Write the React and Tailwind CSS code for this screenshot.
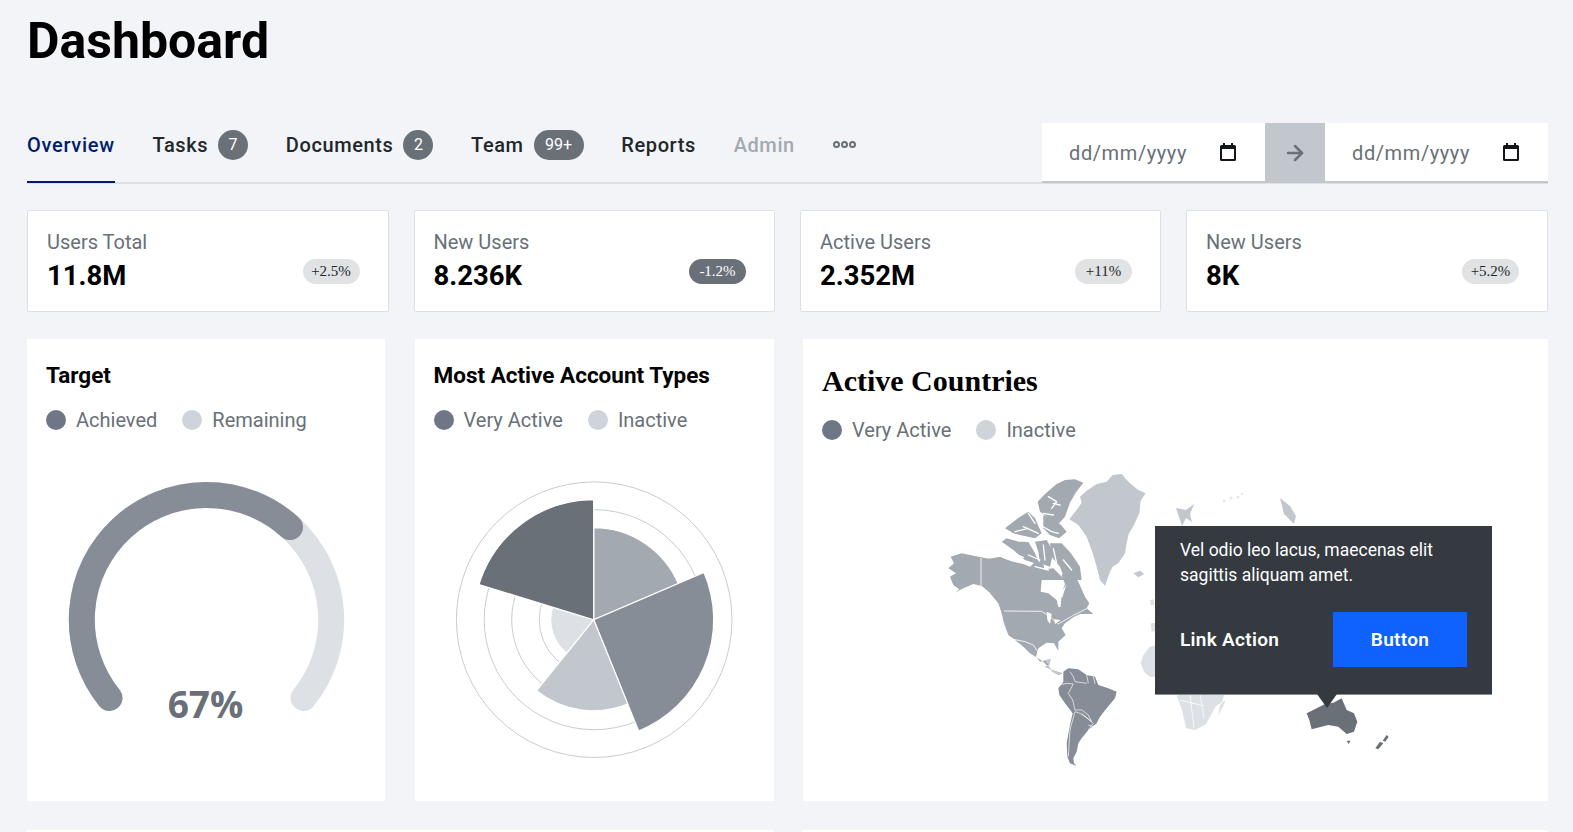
import { ArrowRight } from 'lucide-react';

const tabs = [
  { label: 'Overview', active: true },
  { label: 'Tasks', badge: '7' },
  { label: 'Documents', badge: '2' },
  { label: 'Team', badge: '99+' },
  { label: 'Reports' },
  { label: 'Admin', disabled: true },
];

const stats = [
  { label: 'Users Total', value: '11.8M', delta: '+2.5%' },
  { label: 'New Users', value: '8.236K', delta: '-1.2%', dark: true },
  { label: 'Active Users', value: '2.352M', delta: '+11%' },
  { label: 'New Users', value: '8K', delta: '+5.2%' },
];

const sectors = [
  { from: 0, to: 66.8, r: 92, fill: '#a2a9b0' },
  { from: 66.8, to: 158, r: 120, fill: '#878d96' },
  { from: 158, to: 218.8, r: 91, fill: '#c1c7cd' },
  { from: 218.8, to: 287, r: 43, fill: '#dde1e6' },
  { from: 287, to: 360, r: 120, fill: '#697077' },
];

function sectorPath(s, cx, cy) {
  const a = (s.from * Math.PI) / 180;
  const b = (s.to * Math.PI) / 180;
  const x1 = cx + s.r * Math.sin(a);
  const y1 = cy - s.r * Math.cos(a);
  const x2 = cx + s.r * Math.sin(b);
  const y2 = cy - s.r * Math.cos(b);
  return `M${cx} ${cy}L${x1} ${y1}A${s.r} ${s.r} 0 0 1 ${x2} ${y2}Z`;
}

// map shapes are traced at 3x, each group has its own origin
const arctic = [
  '180,72 215,42 240,30 270,28 295,38 272,68 255,98 240,140 222,160 200,150 165,125 158,95',
  '175,135 210,150 228,165 245,185 222,205 195,195 175,175',
  '60,175 85,155 105,140 130,125 150,145 170,190 150,205 105,195 85,190',
  '50,215 65,205 100,215 130,215 150,250 165,285 120,270 85,240',
  '150,215 185,210 205,245 195,290 165,280 160,245',
  '195,220 230,220 258,250 285,290 290,330 240,330 225,290 200,260',
  '0,268 40,262 85,275 115,285 160,300 205,295 240,330 0,330',
];

const fjords = [
  'M190 80L215 95L200 115',
  'M205 100L225 105',
  'M175 130L205 135',
  'M165 165L200 185L220 190',
  'M90 185L130 175',
  'M130 130L150 160',
  'M115 170L160 190',
  'M125 215L165 205',
  'M175 225L180 270',
  'M205 235L215 280',
  'M130 255L165 270',
  'M235 270L260 300',
  'M80 250L115 262',
  'M150 290L190 300',
];

function DateField() {
  return (
    <div className="w-[223px] h-full flex items-center justify-between pl-[27px] pr-[29px]">
      <span className="text-[20px] tracking-[0.6px] text-[#697077] pt-[1px]">dd/mm/yyyy</span>
      <svg width="16" height="18" viewBox="0 0 16 18">
        <path d="M3 0h2v2h6V0h2v2h1.5A1.5 1.5 0 0 1 16 3.5v13a1.5 1.5 0 0 1-1.5 1.5h-13A1.5 1.5 0 0 1 0 16.500v-13A1.500 1.500 0 0 1 1.500 2H3z M2 6v10h12V6z" fill="#121619" fillRule="evenodd" />
      </svg>
    </div>
  );
}

function Legend({ items }) {
  return (
    <div className="flex items-center gap-[25px] text-[20px] text-[#697077]">
      {items.map((it, i) => (
        <div key={it} className="flex items-center gap-[10px]">
          <span className={`w-[20px] h-[20px] rounded-full ${i === 0 ? 'bg-[#6f7787]' : 'bg-[#cfd3da]'}`} />
          {it}
        </div>
      ))}
    </div>
  );
}

function WorldMap() {
  return (
    <svg width="590" height="330" viewBox="930 460 590 330">
      <g transform="translate(930 460) scale(0.3333)">
        <polygon fill="#c1c7cd" points="418,178 432,160 440,150 455,128 450,110 470,92 500,72 530,65 548,45 575,42 590,60 610,78 625,90 647,100 632,122 628,160 612,195 596,222 590,250 585,280 565,310 548,320 540,335 525,378 510,360 504,335 500,320 490,285 470,230 445,195" />
        <polygon fill="#a2a9b0" points="62,290 95,280 153,292 185,298 210,290 245,305 280,312 300,320 320,302 340,312 345,335 335,360 332,395 355,400 380,420 385,442 392,440 395,400 405,372 395,345 410,330 432,337 447,370 465,410 478,430 470,445 490,462 470,462 450,462 430,472 405,490 395,505 407,525 385,545 385,572 372,550 350,548 325,565 318,590 330,605 350,600 362,598 358,615 345,620 365,630 398,640 385,645 368,635 340,605 300,580 280,560 255,540 235,525 222,490 215,460 205,430 180,400 155,378 130,372 100,385 75,398 88,388 70,375 60,350 78,340 55,325 72,310" />
        <g fill="#fff">
          <polygon points="350,455 365,462 360,492 352,480" />
          <polygon points="372,478 392,480 375,492" />
          <polygon points="385,400 400,388 410,372 396,415" />
        </g>
        <g fill="none" stroke="#fff" strokeWidth="2.500">
          <path d="M153 294V378L180 400" />
          <path d="M222 453L335 454L360 470L385 492L430 466L470 446" />
          <path d="M250 538L285 545L310 555L325 578" />
        </g>
        <polygon fill="#c1c7cd" points="345,600 362,598 358,615 345,620 365,630 398,640 385,645 368,635" />
        <polygon fill="#c1c7cd" points="610,340 630,332 642,342 625,352" />
        <polygon fill="#dde1e6" points="660,420 672,418 672,435 662,435" />
        <polygon fill="#dde1e6" points="662,490 680,488 680,512 665,515" />
        <polygon fill="#dde1e6" points="632,610 640,585 660,560 680,555 680,650 660,652 642,635" />
      </g>
      <g transform="translate(985 470) scale(0.3333)">
        <g fill="#a2a9b0">
          {arctic.map((p) => (
            <polygon key={p} points={p} />
          ))}
        </g>
        <g fill="none" stroke="#fff" strokeWidth="4" strokeLinecap="round" strokeLinejoin="round">
          {fjords.map((d) => (
            <path key={d} d={d} />
          ))}
        </g>
      </g>
      <g transform="translate(1050 660) scale(0.3333)">
        <polygon fill="#878d96" points="40,35 55,25 85,28 110,45 135,50 145,75 175,85 200,95 195,115 170,145 150,170 140,190 115,210 95,235 85,250 80,275 70,295 72,310 80,318 60,310 52,290 50,250 60,195 68,160 45,130 28,105 25,85 40,65" />
        <g fill="none" stroke="#fff" strokeWidth="2">
          <path d="M25 75L50 70L70 72L55 100L68 120L75 150" />
          <path d="M75 150L95 150L115 165L125 185L105 170L90 160L75 155" />
          <path d="M75 155L60 210L55 290" />
          <path d="M95 160L130 190L115 210" />
          <path d="M60 35L70 50L75 65L110 70" />
          <path d="M110 45L115 70M130 50L135 72" />
          <path d="M115 195L130 200L118 212" />
        </g>
      </g>
      <g fill="#dde1e6">
        <polygon points="1177,696 1180,694 1225,692 1222,702 1216,706 1206,724 1195,730 1186,728 1182,710" />
        <polygon points="1220,705 1225,700 1225,702 1218,716" />
      </g>
      <path d="M1180 700L1204 706M1190 694L1194 728M1200 694L1204 718" fill="none" stroke="#fff" strokeWidth="0.800" />
      <g fill="#c1c7cd">
        <polygon points="1176,508 1186,510 1194,504 1190,514 1192,522 1186,518 1182,526" />
        <polygon points="1280,498 1290,506 1296,516 1294,524 1284,514" />
      </g>
      <g fill="#e4e6ea">
        <circle cx="1224" cy="501" r="1.500" />
        <circle cx="1231" cy="498" r="1.500" />
        <circle cx="1238" cy="497" r="1.500" />
        <circle cx="1242" cy="494" r="1.200" />
      </g>
      <g transform="translate(1130 480) scale(0.3333)" fill="#697077">
        <polygon points="530,700 560,685 585,672 610,668 635,655 650,690 672,700 682,725 672,755 650,762 625,740 595,735 545,748 538,720" />
        <polygon points="650,782 662,782 656,792" />
        <polygon points="736,805 750,785 760,790 745,808" />
        <polygon points="758,782 770,765 776,770 766,785" />
      </g>
    </svg>
  );
}

export default function App() {
  return (
    <div className="h-screen overflow-hidden bg-[#f2f4f8] pl-[27px] pr-[25px] font-['Roboto',sans-serif]">
      <h1 className="h-[123px] pt-[12px] text-[50px] leading-[58px] font-bold text-black">Dashboard</h1>

      <div className="flex items-end justify-between h-[61px] border-b-2 border-[#dde1e6]">
        <div className="flex items-center gap-[37.7px] h-full">
          {tabs.map((t) => (
            <div
              key={t.label}
              className={`flex items-center gap-[10px] h-full text-[20px] font-medium ${
                t.active ? 'tracking-[0.7px] text-[#001d6c] border-b-2 border-[#001d6c] -mb-[2px] pb-[15px]' : t.disabled ? 'tracking-[0.6px] text-[#a2a9b0] pb-[16px]' : 'tracking-[0.6px] text-[#21272a] pb-[16px]'
              }`}
            >
              {t.label}
              {t.badge && (
                <span className={`h-[30px] flex items-center justify-center rounded-full bg-[#697077] text-white text-[16px] font-normal tracking-normal ${t.badge.length > 1 ? 'w-[50px]' : 'w-[30px]'}`}>
                  {t.badge}
                </span>
              )}
            </div>
          ))}
          <div className="flex gap-[1px] pb-[16px]">
            {[0, 1, 2].map((i) => (
              <span key={i} className="w-[7px] h-[7px] rounded-full border-2 border-[#697077]" />
            ))}
          </div>
        </div>
        <div className="flex h-[60px] bg-white border-b-2 border-[#c1c7cd] -mb-[1px]">
          <DateField />
          <div className="w-[60px] h-[60px] bg-[#c1c7cd] flex items-center justify-center">
            <ArrowRight size={24} strokeWidth={2.5} color="#697077" />
          </div>
          <DateField />
        </div>
      </div>

      <div className="grid grid-cols-[361.5px_361.5px_361px_1fr] gap-[25px] mt-[26px]">
        {stats.map((s, i) => (
          <div key={i} className="h-[102px] bg-white border border-[#dde1e6] rounded-[2px] pl-[19px] pr-[28px] pb-[17px] flex items-end justify-between">
            <div>
              <div className="text-[20px] leading-[24px] mb-[4px] text-[#697077]">{s.label}</div>
              <div className="text-[27.5px] leading-[36px] font-bold text-black">{s.value}</div>
            </div>
            <span className={`h-[25px] w-[57px] flex items-center justify-center rounded-full text-[15px] font-['Liberation_Serif',serif] mb-[10px] ${s.dark ? 'bg-[#697077] text-white' : 'bg-[#e1e2e4] text-[#21272a]'}`}>
              {s.delta}
            </span>
          </div>
        ))}
      </div>

      <div className="grid grid-cols-[358px_359px_1fr] gap-x-[29.5px] mt-[27px]">
        <div className="h-[462px] bg-white">
          <div className="h-[131px] pl-[19px] pt-[22px]">
            <h2 className="text-[22.5px] leading-[28px] font-bold text-black mb-[16px]">Target</h2>
            <Legend items={['Achieved', 'Remaining']} />
          </div>
          <svg width="358" height="300" viewBox="27 470 358 300">
            <path d="M109.500 698A124.700 124.700 0 1 1 303.500 698" fill="none" stroke="#dde1e6" strokeWidth="26" strokeLinecap="round" />
            <path d="M109.500 698A124.700 124.700 0 1 1 303.500 698" pathLength="100" strokeDasharray="66.300 100" fill="none" stroke="#878d96" strokeWidth="26" strokeLinecap="round" />
            <text x="205.500" y="718" textAnchor="middle" fontSize="37" fontWeight="700" fill="#697077" fontFamily="Open Sans">67%</text>
          </svg>
        </div>

        <div className="h-[462px] bg-white">
          <div className="h-[131px] pl-[19px] pt-[22px]">
            <h2 className="text-[22.5px] leading-[28px] font-bold text-black mb-[16px]">Most Active Account Types</h2>
            <Legend items={['Very Active', 'Inactive']} />
          </div>
          <svg width="359" height="300" viewBox="414.500 470 359 300">
            {[137.8, 110, 82.5, 55].map((r) => (
              <circle key={r} cx="593.700" cy="619.700" r={r} fill="none" stroke="#c8ccd2" strokeWidth="1" />
            ))}
            {sectors.map((s) => (
              <path key={s.from} d={sectorPath(s, 593.2, 619.7)} fill={s.fill} stroke="#fff" strokeWidth="1.200" />
            ))}
          </svg>
        </div>

        <div className="h-[462px] bg-white relative">
          <div className="h-[121px] pl-[19px] pt-[24px]">
            <h2 className="text-[30px] leading-[36px] font-bold text-black font-['Liberation_Serif',serif] mb-[16px]">Active Countries</h2>
            <Legend items={['Very Active', 'Inactive']} />
          </div>
          <div className="ml-[127px]">
            <WorldMap />
          </div>
          <div className="absolute left-[352px] top-[187px] w-[337px] h-[169px] bg-[#343a3f] border-b border-[#878d96] pl-[25px] pr-[25px] pt-[12px]">
            <p className="text-[17.5px] leading-[25px] text-white">Vel odio leo lacus, maecenas elit sagittis aliquam amet.</p>
            <div className="flex items-center justify-between mt-[24px]">
              <span className="text-[19px] font-semibold tracking-[0.3px] text-white pt-[2px]">Link Action</span>
              <button className="w-[134px] h-[55px] pt-[2px] bg-[#0f62fe] text-white text-[19px] font-semibold tracking-[0.3px]">Button</button>
            </div>
            <span className="absolute left-[162px] top-full w-0 h-0 border-x-[10px] border-x-transparent border-t-[14px] border-t-[#343a3f]" />
          </div>
        </div>
      </div>

      <div className="grid grid-cols-2 gap-x-[29px] mt-[29px]">
        <div className="h-[200px] bg-white" />
        <div className="h-[200px] bg-white" />
      </div>
    </div>
  );
}
